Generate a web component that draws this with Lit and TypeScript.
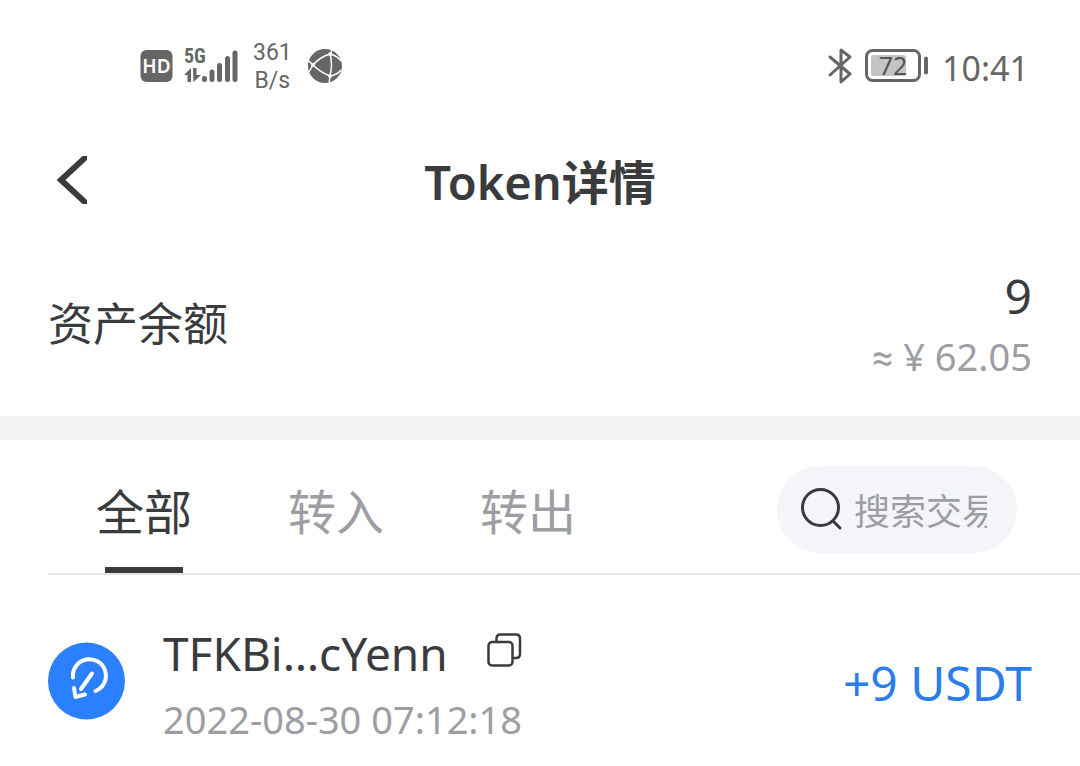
import { LitElement, html, css } from "lit";
import { customElement, property, state } from "lit/decorators.js";
import { classMap } from "lit/directives/class-map.js";

@customElement("status-bar")
class StatusBar extends LitElement {
  static styles = css`
    :host {
      display: flex;
      justify-content: space-between;
      align-items: center;
      height: 132px;
      box-sizing: border-box;
      padding: 0 51px 0 140px;
      color: #666;
      font-family: "Noto Sans", "Noto Sans CJK SC", sans-serif;
    }
    svg {
      display: block;
      flex: none;
    }
    .group {
      display: flex;
      align-items: center;
    }
    .signals {
      gap: 11px;
    }
    .speed {
      padding-top: 2px;
      margin: 0 4px;
      font-family: Roboto, sans-serif;
      font-size: 23px;
      line-height: 28px;
      text-align: center;
    }
    .power {
      gap: 13px;
    }
    .clock {
      padding-top: 3px;
      font-size: 34px;
      line-height: 40px;
    }
    .hd {
      font: 600 19px "Noto Sans", sans-serif;
    }
    .net {
      font: 700 20px "Roboto Condensed", Roboto, sans-serif;
    }
    .level {
      font: 25px "Noto Sans", sans-serif;
    }
  `;

  render() {
    return html`
      <div class="group signals">
        <svg width="33" height="32" viewBox="0 0 33 32" aria-label="HD">
          <rect x="0.5" width="32" height="32" rx="6" fill="#666" />
          <text class="hd" x="16.5" y="23" text-anchor="middle" fill="#fff">HD</text>
        </svg>
        <svg width="54" height="48" viewBox="0 -4 54 48" fill="#666" aria-label="5G">
          <text class="net" x="0" y="17">5G</text>
          <path d="M7 22v14H3.500v-7H0zM9 22h3.500v7H17L9.500 36z" />
          <g stroke="#666" stroke-width="5" stroke-linecap="round">
            <path d="M20.500 32.500v1M28 26v7.500M35.500 19.500v14M43.500 12.500v21M51 7v26.500" />
          </g>
        </svg>
        <div class="speed">361<br />B/s</div>
        <svg width="36" height="36" viewBox="0 0 36 36">
          <circle cx="18" cy="18" r="17" fill="#666" />
          <g fill="none" stroke="#fff" stroke-width="1.500">
            <path d="M6 17Q13 9 23 6Q26 16 23 28Q13 24 6 17M23 6L26 0M23 6Q31 8 34 13M23 28Q30 27 34 22M23 28L22 36M6 17L1 12M6 17L2 24" />
          </g>
          <g fill="#fff">
            <circle cx="6" cy="17" r="2" />
            <circle cx="23.500" cy="6" r="2" />
            <circle cx="23" cy="28" r="2" />
          </g>
        </svg>
      </div>
      <div class="group power">
        <svg width="24" height="36" viewBox="0 0 24 36" fill="none" stroke="#666" stroke-width="3" stroke-linejoin="round" stroke-linecap="round">
          <path d="M2 9L22 26L13 34V2L22 9L2 27" />
        </svg>
        <svg width="64" height="34" viewBox="0 0 64 34">
          <rect x="1.500" y="1.500" width="53" height="30" rx="6" fill="none" stroke="#666" stroke-width="3" />
          <rect x="6" y="6" width="35" height="21" rx="3" fill="#c4c4c4" />
          <path d="M61 9.500v14" stroke="#666" stroke-width="4" stroke-linecap="round" />
          <text class="level" x="28" y="26" text-anchor="middle" fill="#555">72</text>
        </svg>
        <time class="clock">10:41</time>
      </div>
    `;
  }
}

@customElement("tx-row")
class TxRow extends LitElement {
  @property() address = "";
  @property() time = "";
  @property() amount = "";

  static styles = css`
    :host {
      display: flex;
      align-items: center;
      padding: 46px 48px 24px;
    }
    svg {
      display: block;
      flex: none;
    }
    .badge {
      margin-bottom: 12px;
    }
    .info {
      flex: 1;
      margin-left: 37px;
    }
    .top {
      display: flex;
      align-items: center;
      gap: 39px;
    }
    .address {
      font-size: 46px;
      line-height: 64px;
      color: #3a3b3d;
    }
    .copy {
      border: 0;
      padding: 0 0 6px;
      background: none;
      color: #3a3b3d;
    }
    .time {
      display: block;
      font-size: 38px;
      line-height: 68px;
      color: #9d9ea3;
    }
    .amount {
      margin-bottom: 8px;
      font-size: 48px;
      line-height: 64px;
      color: #2b7de9;
    }
  `;

  render() {
    return html`
      <svg class="badge" width="78" height="78" viewBox="0 0 78 78">
        <circle cx="38.500" cy="39" r="38.500" fill="#2a80ff" />
        <g fill="none" stroke="#fff" stroke-width="4" stroke-linecap="round" stroke-linejoin="round">
          <path d="M25 35.500A16.500 16.500 0 1 1 47.500 49" />
          <path d="M44 31.500L33 47M26 46L27.500 55L37 52.500" />
        </g>
      </svg>
      <div class="info">
        <div class="top">
          <span class="address">${this.address}</span>
          <button class="copy" aria-label="复制">
            <svg width="35" height="34" viewBox="0 0 35 34" fill="none" stroke="currentColor" stroke-width="2.500">
              <path d="M9.500 9V5.500Q9.500 1.500 13.500 1.500H29Q33 1.500 33 5.500V21Q33 25 29 25H25.500" />
              <rect x="1.500" y="9" width="24" height="23.500" rx="3.500" />
            </svg>
          </button>
        </div>
        <time class="time">${this.time}</time>
      </div>
      <span class="amount">${this.amount}</span>
    `;
  }
}

@customElement("app-root")
class AppRoot extends LitElement {
  @state() private active = 0;
  private tabs = ["全部", "转入", "转出"];

  static styles = css`
    :host {
      display: block;
      min-height: 100vh;
      background: #fff;
      color: #3a3b3d;
      font-family: "Noto Sans", "Noto Sans CJK SC", sans-serif;
    }
    button,
    input {
      font-family: inherit;
      border: 0;
      padding: 0;
      background: none;
    }
    svg {
      display: block;
      flex: none;
    }
    .nav {
      display: grid;
      grid-template-columns: 1fr auto 1fr;
      align-items: center;
      height: 96px;
      padding: 0 48px;
    }
    .back {
      justify-self: start;
      padding: 0 8px;
      color: #3a3b3d;
    }
    .title {
      margin: 0;
      padding-top: 4px;
      font-size: 47px;
      line-height: 64px;
      font-weight: 600;
    }
    .balance {
      display: flex;
      justify-content: space-between;
      align-items: center;
      padding: 38px 48px 34px;
      border-bottom: 24px solid #f4f4f4;
    }
    .label {
      font-size: 45px;
      line-height: 64px;
    }
    .value {
      text-align: right;
    }
    .count {
      font-size: 48px;
      line-height: 60px;
    }
    .fiat {
      padding-top: 4px;
      font-size: 38px;
      line-height: 52px;
      color: #9d9ea3;
    }
    .approx {
      font-family: Roboto, sans-serif;
      line-height: 1;
    }
    .filters {
      display: flex;
      justify-content: space-between;
      margin-left: 48px;
      padding-right: 63px;
      border-bottom: 2px solid #e6e6e8;
    }
    .tabs {
      display: flex;
    }
    .tab {
      display: flex;
      flex-direction: column;
      align-items: center;
      justify-content: space-between;
      width: 192px;
      height: 133px;
      padding-top: 40px;
      box-sizing: border-box;
      font-size: 48px;
      line-height: 64px;
      color: #9d9ea3;
    }
    .tab::after {
      content: "";
      width: 78px;
      height: 6px;
    }
    .tab.on {
      color: #3a3b3d;
    }
    .tab.on::after {
      background: #3a3b3d;
    }
    .search {
      display: flex;
      align-items: center;
      gap: 11px;
      width: 240px;
      height: 87px;
      margin-top: 26px;
      padding: 0 30px 0 23px;
      box-sizing: border-box;
      border-radius: 44px;
      background: #f4f5f8;
    }
    .query {
      flex: 1;
      min-width: 0;
      height: 56px;
      padding-top: 4px;
      box-sizing: border-box;
      font-size: 36px;
      color: #3a3b3d;
      outline: none;
    }
    .query::placeholder {
      color: #9d9ea3;
      opacity: 1;
    }
  `;

  render() {
    return html`
      <status-bar></status-bar>
      <header class="nav">
        <button class="back" aria-label="返回">
          <svg width="31" height="48" viewBox="0 0 31 48" fill="none" stroke="currentColor" stroke-width="6">
            <path d="M31 0L5 24L31 48" />
          </svg>
        </button>
        <h1 class="title">Token详情</h1>
      </header>
      <section class="balance">
        <span class="label">资产余额</span>
        <div class="value">
          <div class="count">9</div>
          <div class="fiat"><span class="approx">≈</span> ¥ 62.05</div>
        </div>
      </section>
      <div class="filters">
        <nav class="tabs">
          ${this.tabs.map(
            (name, i) => html`<button
              class=${classMap({ tab: true, on: i === this.active })}
              @click=${() => (this.active = i)}
            >${name}</button>`
          )}
        </nav>
        <label class="search">
          <svg width="43" height="43" viewBox="0 0 43 43" fill="none" stroke="#3a3b3d" stroke-width="3" stroke-linecap="round" aria-label="搜索">
            <circle cx="20.500" cy="19.500" r="18" />
            <path d="M33 33L40 40" />
          </svg>
          <input class="query" type="text" placeholder="搜索交易" />
        </label>
      </div>
      <tx-row address="TFKBi…cYenn" time="2022-08-30 07:12:18" amount="+9 USDT"></tx-row>
    `;
  }
}
